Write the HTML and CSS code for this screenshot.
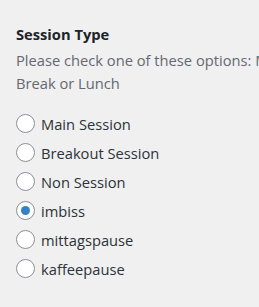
FILE: index.html
```html
<!DOCTYPE html>
<html lang="en">

<head>
    <meta charset="UTF-8">
    <meta name="viewport" content="width=device-width, initial-scale=1.0">
    <title>Session Type</title>
    <link rel="stylesheet" href="styles.css">
</head>

<body>

    <!-- Session type field -->
    <div class="field">
        <h3 class="field-title">Session Type</h3>
        <p class="field-desc">Please check one of these options: Main Session, Breakout Session, Non Session, Break or Lunch</p>

        <ul class="choices">
            <li><label><input type="radio" name="session_type"> Main Session</label></li>
            <li><label><input type="radio" name="session_type"> Breakout Session</label></li>
            <li><label><input type="radio" name="session_type"> Non Session</label></li>
            <li><label><input type="radio" name="session_type" checked> imbiss</label></li>
            <li><label><input type="radio" name="session_type"> mittagspause</label></li>
            <li><label><input type="radio" name="session_type"> kaffeepause</label></li>
        </ul>
    </div>

</body>

</html>
```

FILE: styles.css
```css
* {
    margin: 0;
    padding: 0;
    box-sizing: border-box;
    font-family: "Open Sans", sans-serif;
}

body {
    background-color: #f0f0f1;
    overflow: hidden;
}

/* Field */
.field {
    padding: 24px 16px;
    width: 760px;
}

.field-title {
    font-size: 14.7px;
    font-weight: bold;
    line-height: 20px;
    color: #1d2327;
}

.field-desc {
    font-size: 14.7px;
    line-height: 23px;
    color: #646970;
    margin-top: 5px;
    width: 588px;
}

/* Radio list */
.choices {
    list-style: none;
    margin-top: 14px;
}

.choices li {
    height: 29px;
    display: flex;
    align-items: center;
}

.choices label {
    display: flex;
    align-items: center;
    gap: 6px;
    font-size: 14.7px;
    color: #2c3338;
    cursor: pointer;
}

.choices input[type="radio"] {
    appearance: none;
    width: 19px;
    height: 19px;
    border: 1px solid #8c8f94;
    border-radius: 50%;
    background: white;
    display: flex;
    align-items: center;
    justify-content: center;
    margin: 0;
}

.choices input[type="radio"]:checked::before {
    content: "";
    width: 9px;
    height: 9px;
    border-radius: 50%;
    background-color: #3582c4;
}
```
